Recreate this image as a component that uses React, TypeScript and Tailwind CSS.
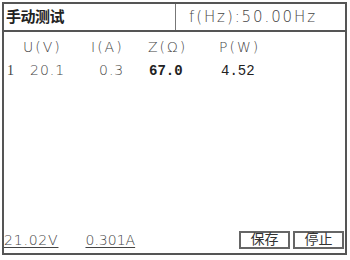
import React from 'react';

const thin = "font-['DejaVu_Sans',sans-serif] font-extralight";
const serif = "font-['Liberation_Serif','Noto_Sans_CJK_SC',serif]";
const mono = "font-['Liberation_Mono',monospace]";

const columns = [
  { label: 'U(V)', x: 'w-[68px]' },
  { label: 'I(A)', x: 'w-[57px]' },
  { label: 'Z(Ω)', x: 'w-[71px]' },
  { label: 'P(W)', x: 'w-[60px]' },
];

export default function App() {
  return (
    <div className="w-[350px] h-[260px] bg-white pl-[2px] pt-[2px]">
      <div className="w-[345px] h-[253px] border-2 border-[#555] flex flex-col text-[#444]">
        <div className="h-[28px] flex border-b-2 border-[#555]">
          <div className="w-[172px] border-r border-[#777] flex items-center pl-[2px]">
            <span className={`${serif} text-[15px] font-bold text-[#222] tracking-[-0.5px]`}>手动测试</span>
          </div>
          <div className={`flex-1 flex items-center pl-[13px] text-[15px] tracking-[1.9px] ${thin}`}>
            f(Hz):50.00Hz
          </div>
        </div>

        <div className="flex-1 pt-[5px]">
          <div className={`flex pl-[19px] text-[14px] tracking-[2px] ${thin}`}>
            {columns.map((c) => (
              <div key={c.label} className={c.x}>
                {c.label}
              </div>
            ))}
          </div>
          <div className="flex items-baseline pl-[3px] mt-[2px] text-[14px]">
            <div className={`w-[23px] ${serif}`}>1</div>
            <div className={`w-[69px] tracking-[1px] ${thin}`}>20.1</div>
            <div className={`w-[50px] tracking-[1px] ${thin}`}>0.3</div>
            <div className={`w-[72px] ${mono} font-bold text-[#222]`}>67.0</div>
            <div className={`${mono} text-[#222]`}>4.52</div>
          </div>
        </div>

        <div className="h-[24px] flex items-center pb-[2px]">
          <span className={`underline underline-offset-2 text-[14px] tracking-[0.8px] ${thin}`}>21.02V</span>
          <span className={`ml-[27px] underline underline-offset-2 text-[14px] ${thin}`}>0.301A</span>
          <div className="ml-auto flex gap-[3px] pr-[1px]">
            <button className={`w-[51px] h-[18px] border-2 border-[#666] ${serif} text-[14px] leading-none text-[#333]`}>
              保存
            </button>
            <button className={`w-[51px] h-[18px] border-2 border-[#666] ${serif} text-[14px] leading-none text-[#333]`}>
              停止
            </button>
          </div>
        </div>
      </div>
    </div>
  );
}
